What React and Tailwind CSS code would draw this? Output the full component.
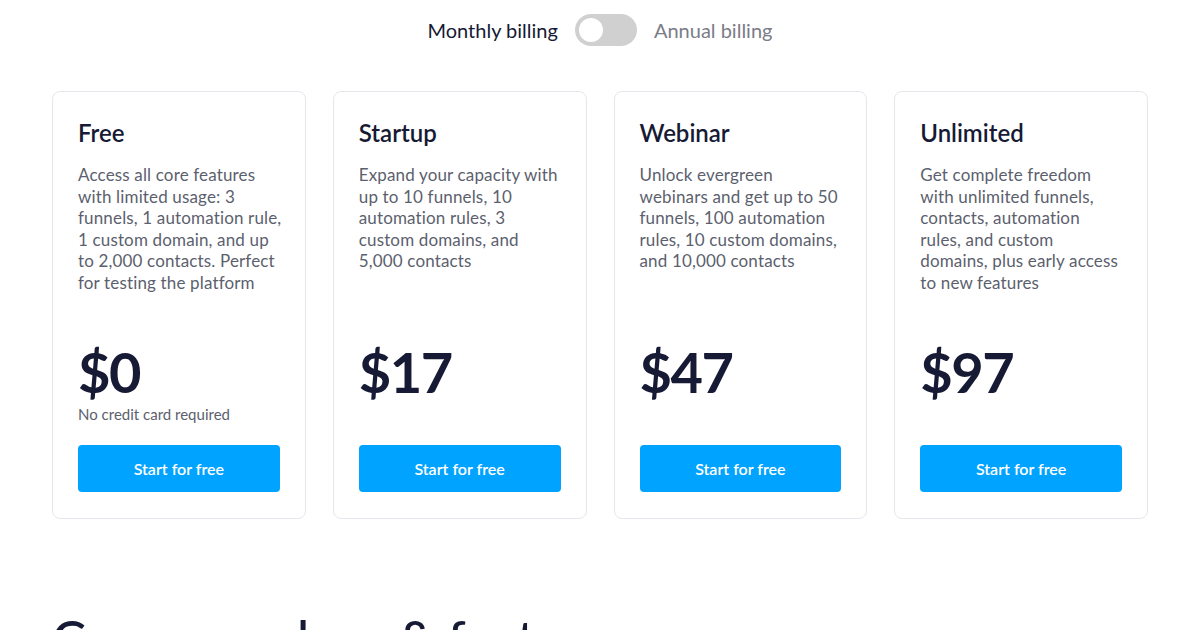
import React from "react";

const plans = [
  {
    name: "Free",
    lines: [
      "Access all core features",
      "with limited usage: 3",
      "funnels, 1 automation rule,",
      "1 custom domain, and up",
      "to 2,000 contacts. Perfect",
      "for testing the platform",
    ],
    price: "$0",
    note: "No credit card required",
  },
  {
    name: "Startup",
    lines: [
      "Expand your capacity with",
      "up to 10 funnels, 10",
      "automation rules, 3",
      "custom domains, and",
      "5,000 contacts",
    ],
    price: "$17",
  },
  {
    name: "Webinar",
    lines: [
      "Unlock evergreen",
      "webinars and get up to 50",
      "funnels, 100 automation",
      "rules, 10 custom domains,",
      "and 10,000 contacts",
    ],
    price: "$47",
  },
  {
    name: "Unlimited",
    lines: [
      "Get complete freedom",
      "with unlimited funnels,",
      "contacts, automation",
      "rules, and custom",
      "domains, plus early access",
      "to new features",
    ],
    price: "$97",
  },
];

export default function App() {
  return (
    <div
      className="w-[1200px] h-[630px] overflow-hidden bg-white"
      style={{ fontFamily: "Lato, 'Noto Sans', sans-serif" }}
    >
      <div className="flex items-center justify-center gap-[17px] pt-[14px] h-[46px]">
        <span className="text-[20px] text-[#161a34]">Monthly billing</span>
        <div className="w-[62px] h-[32px] rounded-full bg-[#d0d0d0] p-[4px] flex items-center">
          <div className="w-[24px] h-[24px] rounded-full bg-white" />
        </div>
        <span className="text-[20px] text-[#7a7c88]">Annual billing</span>
      </div>

      <div className="mx-[52px] mt-[45px] grid grid-cols-4 gap-[27px]">
        {plans.map((p) => (
          <div
            key={p.name}
            className="h-[428px] rounded-[8px] border border-[#e6e7ec] px-[25px] pt-[25px] flex flex-col"
          >
            <h3 className="text-[24px] leading-[32px] font-semibold text-[#161a34]">{p.name}</h3>
            <p className="mt-[15px] h-[130px] text-[17px] leading-[21.6px] tracking-[0.15px] text-[#5c5f6e] whitespace-nowrap">
              {p.lines.map((l, i) => (
                <React.Fragment key={i}>
                  {l}
                  {i < p.lines.length - 1 && <br />}
                </React.Fragment>
              ))}
            </p>
            <div className="mt-[50px] text-[56px] leading-[56px] font-bold text-[#161a34] tracking-[-1.5px]">
              {p.price}
            </div>
            <div className={"mt-[4px] h-[20px] text-[15px] leading-[20px] text-[#5c5f6e] " + (p.note ? "" : "invisible")}>
              {p.note || "placeholder"}
            </div>
            <button className="mt-[21px] h-[47px] w-full rounded-[4px] bg-[#00a3ff] text-white text-[16px] font-semibold">
              Start for free
            </button>
          </div>
        ))}
      </div>

      <h2 className="mx-[52px] mt-[88px] text-[51px] leading-[62px] font-medium text-[#161a34] whitespace-nowrap">
        Compare plans &amp; features
      </h2>
    </div>
  );
}
